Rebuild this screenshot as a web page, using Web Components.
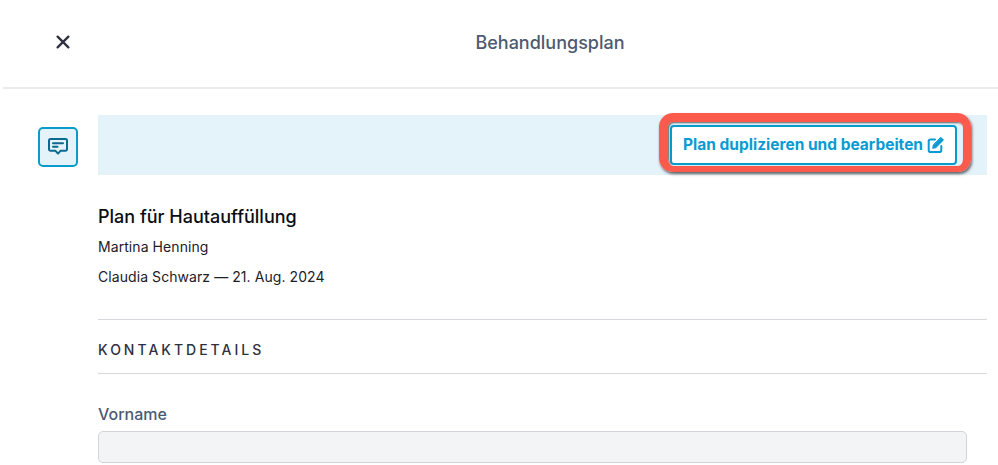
<!DOCTYPE html>
<html lang="de"><head><meta charset="utf-8"><title>Behandlungsplan</title>
<style>
html,body{margin:0;padding:0;background:#fff;overflow:hidden}
body{width:998px;height:465px;font-family:Inter,"Liberation Sans",sans-serif}
</style></head><body>
<plan-page></plan-page>
<script>
function def(name,css,html){
  customElements.define(name,class extends HTMLElement{
    constructor(){super();const r=this.attachShadow({mode:'open'});r.innerHTML='<style>'+css+'</style>'+html;}
  });
}
def('plan-header',`
:host{display:grid;grid-template-columns:120px 1fr 21px;align-items:center;height:87px;margin-left:3px;border-bottom:2px solid #e9ebef;box-sizing:content-box}
button{all:unset;display:flex;margin-left:51px;width:18px;height:18px;margin-top:-4px}
h1{margin:0 0 2px;text-align:center;font:500 18px/24px Inter,sans-serif;color:#4d5a70}
`,`<button aria-label="Schließen"><svg width="18" height="18" viewBox="0 0 18 18" fill="none" stroke="#2d3142" stroke-width="2.3" stroke-linecap="round"><path d="M3.6 3.6 14.4 14.4M14.4 3.6 3.6 14.4"/></svg></button><h1>Behandlungsplan</h1><span></span>`);
def('plan-icon',`
:host{display:flex;align-items:center;justify-content:center;width:40px;height:40px;box-sizing:border-box;border:2px solid #0a9bcd;border-radius:5px;background:#e4f2fa}
`,`<svg width="22" height="20" viewBox="0 0 22 20" fill="none" stroke="#0b6a8f" stroke-width="2" stroke-linejoin="round" stroke-linecap="round"><path d="M3.5 2h15A1.500 1.500 0 0 1 20 3.500v8.800a1.500 1.500 0 0 1-1.500 1.500h-5L11 16.600l-2.500-2.800h-5A1.500 1.500 0 0 1 2 12.300V3.500A1.500 1.500 0 0 1 3.500 2z"/><path d="M6 6.200h10M6 9.800h4.500"/></svg>`);
def('dup-button',`
:host{display:block;position:relative}
.btn{display:flex;align-items:center;gap:4px;box-sizing:border-box;width:287px;height:40px;padding:0 0 0 11px;background:#fff;border:2px solid #0a9bcd;border-radius:4px;color:#0a9bd2;font:700 15.500px/20px Inter,"Liberation Sans",sans-serif;white-space:nowrap}
.mark{position:absolute;left:-11px;top:-12px;width:312px;height:59px;box-sizing:border-box;border-style:solid;border-color:#fb5a4d;border-width:9px 8px 6px 9px;border-radius:14px 14px 13px 14px;box-shadow:1px 2px 3px rgba(0,0,0,.6),inset 1px 1px 2px rgba(0,0,0,.6);pointer-events:none}
`,`<div class="btn"><span><slot></slot></span><svg width="18" height="18" viewBox="0 0 18 18" fill="none" stroke="#0a9bd2" stroke-width="2" stroke-linecap="round" stroke-linejoin="round"><path d="M8 3.500H3.500A1.800 1.800 0 0 0 1.700 5.300v9A1.800 1.800 0 0 0 3.500 16.100h9a1.800 1.800 0 0 0 1.800-1.800V10"/><path fill="#0a9bd2" stroke-width="1" d="M14 1.500 16.500 4 8.800 11.700 5.700 12.300 6.300 9.200z"/></svg></div><div class="mark"></div>`);
def('action-band',`
:host{display:flex;justify-content:flex-end;align-items:center;height:60px;box-sizing:border-box;padding-right:30px;background:#e4f2fa}
`,`<slot></slot>`);
def('plan-summary',`
:host{display:block;padding-top:29px;color:#1f2433}
h2{margin:0;font:500 18px/26px Inter,sans-serif;color:#0b0d12}
p{margin:0;font:400 14px/20px Inter,sans-serif;color:#1d2029;letter-spacing:.07px}
.a{margin-top:7px}.b{margin-top:10px}
`,`<h2>Plan für Hautauffüllung</h2><p class="a">Martina Henning</p><p class="b">Claudia Schwarz — 21. Aug. 2024</p>`);
def('section-title',`
:host{display:block;margin-top:32px;border-top:1px solid #d5d8dd;border-bottom:1px solid #d5d8dd;height:53px;box-sizing:content-box;color:#2d3142;font:500 14px/20px Inter,sans-serif;letter-spacing:3px}
div{padding-top:20px}
`,`<div><slot></slot></div>`);
def('form-field',`
:host{display:block;margin-top:29px;width:869px}
label{display:block;font:500 16px/22px Inter,sans-serif;color:#4a5a75}
.i{margin-top:6px;height:32px;box-sizing:border-box;background:#f3f4f6;border:1px solid #d1d5db;border-radius:5px}
`,`<label><slot></slot></label><div class="i" role="textbox" aria-readonly="true"></div>`);
def('plan-page',`
:host{display:block;width:998px;height:465px;overflow:hidden}
.body{display:grid;grid-template-columns:40px 889px;column-gap:20px;padding:26px 0 0 38px}
plan-icon{margin-top:12px}
`,`<plan-header></plan-header><div class="body"><plan-icon></plan-icon><main><action-band><dup-button>Plan duplizieren und bearbeiten</dup-button></action-band><plan-summary></plan-summary><section-title>KONTAKTDETAILS</section-title><form-field>Vorname</form-field></main></div>`);
</script>
</body></html>
